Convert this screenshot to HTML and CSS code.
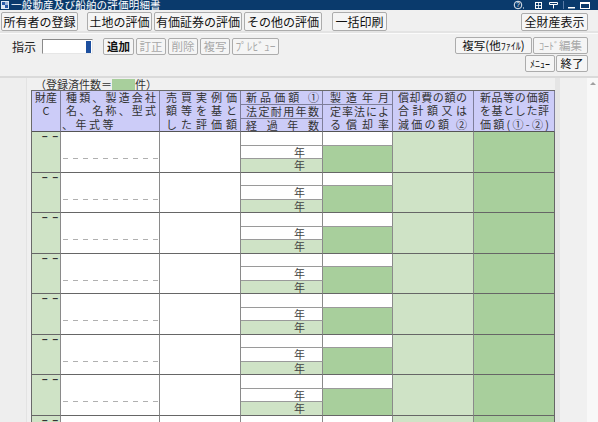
FILE: index.html
```html
<!DOCTYPE html>
<html lang="ja">
<head>
<meta charset="utf-8">
<title>一般動産及び船舶の評価明細書</title>
<link rel="stylesheet" href="styles.css">
</head>
<body>
<div class="win">
  <div class="titlebar">
    <svg class="appicon" viewBox="0 0 8 8" width="8" height="8">
      <rect x="0" y="0" width="8" height="8" fill="#dfe8f5"/>
      <rect x="1" y="1" width="3" height="3" fill="#2a5caa"/>
      <rect x="4" y="4" width="3" height="3" fill="#2a5caa"/>
      <rect x="4" y="1" width="3" height="3" fill="#9fb7dc"/>
    </svg>
    <span class="title">一般動産及び船舶の評価明細書</span>
    <svg class="tb-icons" viewBox="0 0 80 10" width="80" height="10">
      <circle cx="6" cy="5" r="3.8" fill="none" stroke="#fff" stroke-width="0.9"/>
      <text x="6" y="7.3" font-size="6.5" fill="#fff" text-anchor="middle" font-family="Liberation Sans">?</text>
      <rect x="11" y="7.5" width="1" height="1" fill="#fff"/>
      <rect x="23.5" y="2.5" width="6" height="6" fill="none" stroke="#fff" stroke-width="1"/>
      <path d="M24 5.5h5M26.5 3v5" stroke="#fff" stroke-width="0.8"/>
      <path d="M37.5 2.5h8v2h-8z M41.5 4.5v4" stroke="#fff" stroke-width="1" fill="none"/>
      <rect x="51" y="1" width="1" height="8" fill="#5a7aa5"/>
      <rect x="56" y="7" width="7" height="1.5" fill="#fff"/>
      <rect x="68.5" y="2.5" width="9" height="6" fill="none" stroke="#fff" stroke-width="1"/>
      <rect x="68.5" y="2.5" width="9" height="1.5" fill="#fff"/>
    </svg>
  </div>

  <div class="bar1">
    <button class="btn b-owner">所有者の登録</button>
    <div class="grp">
      <button class="btn b-land">土地の評価</button>
      <button class="btn b-sec">有価証券の評価</button>
      <button class="btn b-other">その他の評価</button>
    </div>
    <button class="btn b-print">一括印刷</button>
    <button class="btn b-all">全財産表示</button>
  </div>

  <div class="bar2">
    <div class="cmd">
      <span class="lbl">指示</span>
      <div class="input"><span class="caret"></span></div>
      <div class="actions">
        <button class="btn sm b-add">追加</button>
        <button class="btn sm off b-fix">訂正</button>
        <button class="btn sm off b-del">削除</button>
        <button class="btn sm off b-copy">複写</button>
        <button class="btn sm off b-prev">ﾌﾟﾚﾋﾞｭｰ</button>
      </div>
    </div>
    <div class="side">
      <div class="srow">
        <button class="btn sm b-copyf">複写(他<span class="hw">ﾌｧｲﾙ</span>)</button>
        <button class="btn sm off b-code"><span class="hw">ｺｰﾄﾞ</span>編集</button>
      </div>
      <div class="srow">
        <button class="btn sm b-menu"><span class="hw">ﾒﾆｭｰ</span></button>
        <button class="btn sm b-end">終了</button>
      </div>
    </div>
  </div>

  <div class="main">
    <div class="gutter"></div>
    <div class="panel">
      <div class="count">（登録済件数＝<span class="cbox"></span>件）</div>
      <div class="sheet">
        <div class="head">
          <div class="h c1"><div>財産</div><div>C</div></div>
          <div class="h c2"><div class="jl">種類、製造会社</div><div class="jl">名、名称、型式</div><div class="ls">、年式等</div></div>
          <div class="h c3"><div class="jl">売買実例価</div><div class="jl">額等を基と</div><div class="jl">した評価額</div></div>
          <div class="h c4a"><div class="jl">新品価額 ①</div></div>
          <div class="h c4b"><div class="jl">法定耐用年数</div></div>
          <div class="h c4c"><div class="jl">経過年数</div></div>
          <div class="h c5a"><div class="jl">製造年月</div></div>
          <div class="h c5b"><div class="jl">定率法によ</div><div class="jl">る償却率</div></div>
          <div class="h c6"><div class="jl">償却費の額の</div><div class="jl">合計額又は</div><div class="jl">減価の額 ②</div></div>
          <div class="h c7"><div class="jl">新品等の価額</div><div class="jl">を基とした評</div><div class="jl">価額(①-②)</div></div>
        </div>

        <div class="grp-row">
          <div class="g1">– –</div><div class="g2a"></div><div class="g2b"></div><div class="g3"></div>
          <div class="g4a"></div><div class="g4b">年</div><div class="g4c">年</div>
          <div class="g5a"></div><div class="g5b"></div><div class="g6"></div><div class="g7"></div>
        </div>
        <div class="grp-row">
          <div class="g1">– –</div><div class="g2a"></div><div class="g2b"></div><div class="g3"></div>
          <div class="g4a"></div><div class="g4b">年</div><div class="g4c">年</div>
          <div class="g5a"></div><div class="g5b"></div><div class="g6"></div><div class="g7"></div>
        </div>
        <div class="grp-row">
          <div class="g1">– –</div><div class="g2a"></div><div class="g2b"></div><div class="g3"></div>
          <div class="g4a"></div><div class="g4b">年</div><div class="g4c">年</div>
          <div class="g5a"></div><div class="g5b"></div><div class="g6"></div><div class="g7"></div>
        </div>
        <div class="grp-row">
          <div class="g1">– –</div><div class="g2a"></div><div class="g2b"></div><div class="g3"></div>
          <div class="g4a"></div><div class="g4b">年</div><div class="g4c">年</div>
          <div class="g5a"></div><div class="g5b"></div><div class="g6"></div><div class="g7"></div>
        </div>
        <div class="grp-row">
          <div class="g1">– –</div><div class="g2a"></div><div class="g2b"></div><div class="g3"></div>
          <div class="g4a"></div><div class="g4b">年</div><div class="g4c">年</div>
          <div class="g5a"></div><div class="g5b"></div><div class="g6"></div><div class="g7"></div>
        </div>
        <div class="grp-row">
          <div class="g1">– –</div><div class="g2a"></div><div class="g2b"></div><div class="g3"></div>
          <div class="g4a"></div><div class="g4b">年</div><div class="g4c">年</div>
          <div class="g5a"></div><div class="g5b"></div><div class="g6"></div><div class="g7"></div>
        </div>
        <div class="grp-row">
          <div class="g1">– –</div><div class="g2a"></div><div class="g2b"></div><div class="g3"></div>
          <div class="g4a"></div><div class="g4b">年</div><div class="g4c">年</div>
          <div class="g5a"></div><div class="g5b"></div><div class="g6"></div><div class="g7"></div>
        </div>
        <div class="grp-row">
          <div class="g1">– –</div><div class="g2a"></div><div class="g2b"></div><div class="g3"></div>
          <div class="g4a"></div><div class="g4b">年</div><div class="g4c">年</div>
          <div class="g5a"></div><div class="g5b"></div><div class="g6"></div><div class="g7"></div>
        </div>
      </div>
    </div>
    <div class="shade"></div>
    <div class="filler"></div>
    <div class="scroll"><span class="arrow"></span></div>
  </div>
</div>
</body>
</html>
```
FILE: styles.css
```css
* { box-sizing: border-box; }
html, body { margin: 0; padding: 0; }
body {
  width: 598px;
  height: 422px;
  overflow: hidden;
  background: #f0f0f0;
  font-family: "Noto Sans CJK JP", "Noto Sans", sans-serif;
  color: #222;
}
.win { width: 598px; height: 422px; display: flex; flex-direction: column; overflow: hidden; }

/* title bar */
.titlebar {
  flex: none;
  height: 10px;
  background: #0a3a6c;
  color: #fff;
  display: flex;
  align-items: center;
  overflow: hidden;
}
.appicon { flex: none; margin: 0 2px 0 1px; display: block; }
.title { font-size: 10.5px; line-height: 10px; white-space: nowrap; letter-spacing: 0.2px; }
.tb-icons { flex: none; margin-left: auto; margin-right: 6px; display: block; }

/* buttons */
.btn {
  height: 19px;
  border: 1px solid #acacac;
  border-radius: 2px;
  background: #f5f5f5;
  font-family: "Noto Sans CJK JP", "Noto Sans", sans-serif;
  font-size: 12px;
  line-height: 16px;
  color: #111;
  padding: 0;
  margin: 0;
  text-align: center;
  white-space: nowrap;
  overflow: hidden;
}
.btn.sm { height: 17px; line-height: 15px; font-size: 11.5px; }
.btn.off { color: #a8a8a8; }
.hw { font-size: 10px; }

/* row 1 */
.bar1 {
  flex: none;
  height: 24px;
  display: flex;
  align-items: flex-start;
  padding: 2px 10px 0 1px;
  border-bottom: 1px solid #fbfbfb;
  box-shadow: inset 0 -2px 0 #e4e4e4;
}
.grp { display: flex; gap: 2px; margin-left: 9px; }
.b-owner { width: 77px; }
.b-land { width: 65px; }
.b-sec { width: 88px; }
.b-other { width: 78px; }
.b-print { width: 55px; margin-left: 10px; }
.b-all { width: 67px; margin-left: auto; margin-top: 1px; height: 18px; }

/* row 2 */
.bar2 {
  flex: none;
  height: 44px;
  display: flex;
  align-items: flex-start;
  padding-right: 10px;
  border-bottom: 2px solid #dadada;
}
.cmd { display: flex; align-items: center; margin-top: 4px; height: 17px; }
.lbl { width: 42px; padding-left: 12px; font-size: 12px; line-height: 17px; color: #222; }
.input {
  width: 51px;
  height: 15px;
  background: #fff;
  border-top: 1px solid #8a8a8a;
  border-left: 1px solid #8a8a8a;
  border-right: 1px solid #e6e6e6;
  border-bottom: 1px solid #e6e6e6;
  display: flex;
  justify-content: flex-end;
  align-items: center;
  padding-right: 1px;
}
.caret { width: 5px; height: 12px; background: #1d4f9f; }
.actions { display: flex; gap: 2px; margin-left: 10px; }
.b-add { width: 31px; font-weight: bold; }
.b-fix, .b-del, .b-copy { width: 30px; }
.b-prev { width: 47px; font-size: 10px; }
.side { margin-left: auto; margin-top: 3px; display: flex; flex-direction: column; align-items: flex-end; gap: 1px; }
.srow { display: flex; gap: 1px; }
.b-copyf { width: 77px; }
.b-code { width: 55px; }
.b-menu { width: 30px; }
.b-end { width: 32px; }

/* main */
.main { flex: 1; display: flex; overflow: hidden; min-height: 0; }
.gutter { flex: none; width: 27px; border-right: 1px solid #e3e3e3; background: #eeeeee; }
.panel { flex: none; width: 528px; padding-left: 4px; overflow: hidden; }
.count {
  height: 12px;
  padding-left: 4px;
  font-size: 11px;
  line-height: 12px;
  color: #333;
  display: flex;
  align-items: center;
  white-space: nowrap;
}
.cbox { display: inline-block; width: 23px; height: 11px; background: #a8cf9c; }
.shade { flex: none; width: 5px; background: #e5e5e5; }
.filler { flex: 1; }
.scroll { flex: none; width: 11px; background: #f8f8f8; display: flex; justify-content: center; padding-top: 4px; }
.arrow { width: 0; height: 0; border-left: 3px solid transparent; border-right: 3px solid transparent; border-bottom: 3px solid #a0a0a0; }

/* sheet */
.sheet { width: 524px; border-left: 1px solid #6a6a6a; border-top: 1px solid #6a6a6a; }
.head, .grp-row {
  display: grid;
  grid-template-columns: 29px 99px 81px 82px 70px 81px 81px;
}
.head { grid-template-rows: 14px 14px 13px; background: #ccccf8; }
.h {
  border-right: 1px solid #7e7e9a;
  border-bottom: 1px solid #7e7e9a;
  font-size: 11px;
  line-height: 13.4px;
  color: #333;
  overflow: hidden;
  white-space: nowrap;
}
.h.c1, .h.c2, .h.c3, .h.c6, .h.c7 { grid-row: 1 / 4; border-bottom-color: #555; }
.h.c1 { grid-column: 1; text-align: center; }
.h.c2 { grid-column: 2; }
.h.c3 { grid-column: 3; }
.c4a, .c4b, .c4c { grid-column: 4; }
.c4a { grid-row: 1; }
.c4b { grid-row: 2; }
.c4c { grid-row: 3; border-bottom-color: #555; }
.c5a { grid-column: 5; grid-row: 1; }
.c5b { grid-column: 5; grid-row: 2 / 4; border-bottom-color: #555; }
.h.c6 { grid-column: 6; }
.h.c7 { grid-column: 7; }
.c4a .jl, .c4b .jl, .c4c .jl, .c5a .jl { line-height: 13px; }
.jl { text-align: justify; text-align-last: justify; padding: 0 3px 0 5px; }
.c2 .jl { padding: 0 3px 0 5px; }
.ls { padding-left: 1px; letter-spacing: 2.5px; }
.c3 .jl { padding: 0 3px 0 6px; }
.c5a .jl, .c5b .jl { padding: 0 3px 0 7px; }
.c6 .jl { padding: 0 6px 0 5px; }
.c7 .jl { padding: 0 5px 0 6px; }

.grp-row { grid-template-rows: 13.5px 13.5px 13.5px; }
.grp-row > div { border-right: 1px solid #8a8a8a; }
.g1 {
  grid-column: 1; grid-row: 1 / 4;
  background: #cfe3c6;
  border-bottom: 1px solid #666;
  font-family: "Liberation Sans", sans-serif;
  font-weight: bold;
  font-size: 10px;
  line-height: 10px;
  letter-spacing: 1px;
  text-align: right;
  padding-right: 1px;
  color: #333;
}
.g2a {
  grid-column: 2; grid-row: 1 / 3;
  background: #fff linear-gradient(to right, #b0b0b0 5px, transparent 5px) 2px 100% / 10px 1px repeat-x;
}
.g2b { grid-column: 2; grid-row: 3; background: #fff; border-bottom: 1px solid #666; }
.g3 { grid-column: 3; grid-row: 1 / 4; background: #fff; border-bottom: 1px solid #666; }
.g4a { grid-column: 4; grid-row: 1; background: #fff; border-bottom: 1px solid #9a9a9a; }
.g4b, .g4c {
  grid-column: 4;
  font-size: 11px;
  line-height: 12.5px;
  text-align: right;
  padding-right: 17px;
  color: #444;
}
.g4b { grid-row: 2; background: #fff; border-bottom: 1px solid #9a9a9a; }
.g4c { grid-row: 3; background: #cfe3c6; border-bottom: 1px solid #666; }
.g5a { grid-column: 5; grid-row: 1; background: #fff; border-bottom: 1px solid #9a9a9a; }
.g5b { grid-column: 5; grid-row: 2 / 4; background: #a8cf9c; border-bottom: 1px solid #666; }
.g6 { grid-column: 6; grid-row: 1 / 4; background: #cfe3c6; border-bottom: 1px solid #666; }
.g7 { grid-column: 7; grid-row: 1 / 4; background: #a8cf9c; border-bottom: 1px solid #666; }
.grp-row > .g7 { border-right-color: #666; }
```
